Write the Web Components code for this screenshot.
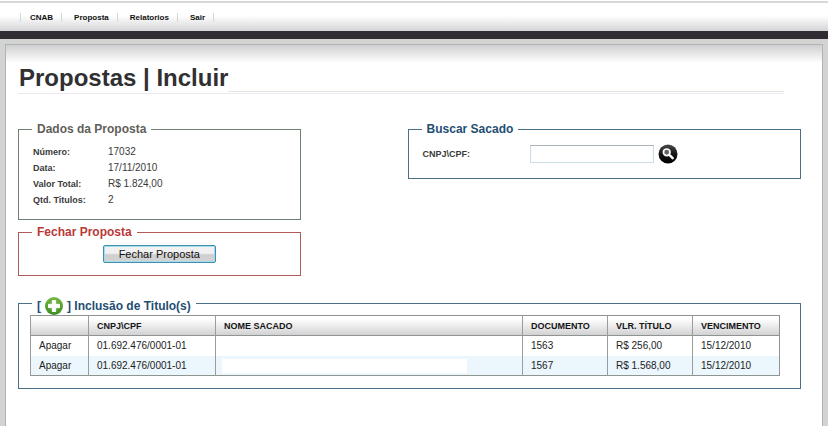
<!DOCTYPE html>
<html lang="pt-BR">
<head>
<meta charset="utf-8">
<title>Propostas | Incluir</title>
<style>
html, body { margin: 0; min-height: 100vh; }
body { display: flex; flex-direction: column; background: #d2d4d2; font: 10px/16px "Liberation Sans", Arial, sans-serif; color: #3a3a3a; }
.columns { display: grid; grid-template-columns: 283fr 394fr; gap: 107px; align-items: start; margin-bottom: 17px; }
.stack { display: grid; gap: 5px; }
.close { display: flex; justify-content: center; }
</style>
</head>
<body>
<nav-menu></nav-menu>
<page-panel heading="Propostas | Incluir">
  <div class="columns">
    <div class="stack">
      <field-box style="--line:#6f7f72; --ink:#5f5f5a; --top:8px; --bottom:11px"><span slot="title">Dados da Proposta</span><proposal-data></proposal-data></field-box>
      <field-box style="--line:#b05a5a; --ink:#b83a38; --top:6px"><span slot="title">Fechar Proposta</span><div class="close"><push-button>Fechar Proposta</push-button></div></field-box>
    </div>
    <field-box style="--top:8px; --bottom:14px"><span slot="title">Buscar Sacado</span><payer-search></payer-search></field-box>
  </div>
  <field-box style="--top:2px; --left:11px; --right:20px; --drop:6px"><add-title slot="title"></add-title><title-table></title-table></field-box>
</page-panel>

<script>
function define(name, html, setup) {
  const t = document.createElement('template');
  t.innerHTML = html;
  customElements.define(name, class extends HTMLElement {
    constructor() {
      super();
      this.attachShadow({ mode: 'open' }).append(t.content.cloneNode(true));
    }
    connectedCallback() { if (setup) setup(this, this.shadowRoot); }
  });
}

define('nav-menu', `<style>
:host { display: block; padding-top: 1px; background: #fff; border-bottom: 8px solid #2e2c32; }
nav { display: flex; align-items: center; height: 28px; padding-left: 20px; border-top: 2px solid #d8d8d8; background: linear-gradient(#fff 45%, #d4d4d8); }
a { font: bold 8px/9px "Liberation Sans", Arial, sans-serif; color: #111; text-decoration: none; padding: 0 8px 0 12px; border-left: 1px solid #d5d8d5; }
a:first-child { padding-left: 9px; }
a:last-child { border-right: 1px solid #d5d8d5; }
</style><nav><a href="#">CNAB</a><a href="#">Proposta</a><a href="#">Relatorios</a><a href="#">Sair</a></nav>`);

define('page-panel', `<style>
:host { display: block; flex: 1; margin: 5px 5px 0; padding: 19px 21px 20px 12px; border: 1px solid #b3b3b6; border-bottom: 0; background: linear-gradient(#cfcfd1, #fff 18px); }
header { display: flex; margin: 0 17px 28px 0; padding-bottom: 1px; border-bottom: 1px solid #eee6f0; }
h1 { margin: 0; padding-left: 1px; font: bold 24px/28px "Liberation Sans", Arial, sans-serif; color: #303033; }
header::after { content: ""; flex: 1; border-bottom: 1px solid #dce8d8; }
</style><header><h1></h1></header><slot></slot>`,
(el, root) => { root.querySelector('h1').textContent = el.getAttribute('heading'); });

define('field-box', `<style>
:host { display: block; }
fieldset { margin: 0; min-width: 0; border: 1px solid var(--line, #4c6f88); padding: var(--top, 7px) var(--right, 14px) var(--bottom, 12px) var(--left, 14px); }
legend { margin-left: calc(13px - var(--left, 14px)); padding: var(--drop, 0) 5px 0 5px; font: bold 12px/14px "Liberation Sans", Arial, sans-serif; color: var(--ink, #1f4e73); }
</style><fieldset><legend><slot name="title"></slot></legend><slot></slot></fieldset>`);

define('proposal-data', `<style>
:host { display: block; }
dl { display: grid; grid-template-columns: 75px 1fr; margin: 0; }
dt { font-weight: bold; font-size: 9px; }
dd { margin: 0; }
</style><dl><dt>Número:</dt><dd>17032</dd><dt>Data:</dt><dd>17/11/2010</dd><dt>Valor Total:</dt><dd>R$ 1.824,00</dd><dt>Qtd. Titulos:</dt><dd>2</dd></dl>`);

define('push-button', `<style>
:host { display: block; }
button { display: block; height: 18px; padding: 0 15px; border: 1px solid #3f8fb0; border-radius: 2px; box-shadow: inset 0 0 0 1px #a5dcec; background: linear-gradient(#f1f1f1 45%, #cfcfcf 55%, #d4d4d4); font: 11px/14px "Liberation Sans", Arial, sans-serif; color: #111; }
</style><button type="button"><slot></slot></button>`);

define('payer-search', `<style>
:host { display: block; }
form { display: flex; align-items: center; height: 20px; }
label { width: 107px; font-weight: bold; font-size: 9px; }
input { box-sizing: border-box; width: 124px; height: 18px; margin: 0; padding: 0 3px; border: 1px solid #ccdce4; border-top-color: #a9b3b8; background: #fff; font: inherit; }
button { margin: 0 0 0 4px; padding: 0; border: 0; background: none; }
svg { display: block; }
</style><form><label for="doc">CNPJ\\CPF:</label><input id="doc" type="text"><button type="button" aria-label="Buscar"><svg width="20" height="20" viewBox="0 0 20 20"><defs><linearGradient id="g" x2="0" y2="1"><stop stop-color="#4a4a4a"/><stop offset=".5" stop-color="#151515"/><stop offset="1" stop-color="#000"/></linearGradient></defs><circle cx="10" cy="10" r="9.5" fill="url(#g)"/><circle cx="8.7" cy="8.3" r="3.3" fill="#666" stroke="#fff" stroke-width="1.7"/><path d="M11.3 10.9l3.4 3.3" stroke="#fff" stroke-width="2.4" stroke-linecap="round"/></svg></button></form>`);

define('add-title', `<style>
:host { display: flex; align-items: center; gap: 3px; height: 14px; }
button { margin: -3px 0; padding: 0; border: 0; background: none; }
svg { display: block; }
</style><span>[</span><button type="button" aria-label="Incluir"><svg width="20" height="20" viewBox="0 0 20 20"><defs><linearGradient id="g" x2="0" y2="1"><stop stop-color="#78b843"/><stop offset="1" stop-color="#3d8d22"/></linearGradient></defs><circle cx="10" cy="10" r="9" fill="url(#g)"/><path d="M8.3 4.5h3.4v3.8h3.8v3.4h-3.8v3.8H8.3v-3.8H4.5V8.3h3.8z" fill="#fff" stroke="#fff" stroke-width="1" stroke-linejoin="round"/></svg></button><span>] Inclusão de Titulo(s)</span>`);

define('title-table', `<style>
:host { display: block; }
table { width: 100%; table-layout: fixed; border-collapse: collapse; border: 1px solid #8f9490; font-size: 10px; color: #222; }
th, td { box-sizing: border-box; height: 20px; padding: 1px 8px 0; text-align: left; line-height: 16px; border-left: 1px solid #9b9b9b; white-space: nowrap; }
th { font-size: 9px; color: #151515; }
thead tr { border-bottom: 1px solid #8f9490; background: linear-gradient(#fff 15%, #d2d2d4); }
tbody tr:nth-child(even) { background: #ebf6fd; }
a { color: inherit; text-decoration: none; }
.act { width: 58px; } .doc { width: 127px; } .num, .val { width: 85px; } .due { width: 87px; }
.name { padding-left: 6px; }
.blank { display: block; width: 84%; height: 14px; background: #fff; }
</style><table><colgroup><col class="act"><col class="doc"><col><col class="num"><col class="val"><col class="due"></colgroup>
<thead><tr><th></th><th>CNPJ\\CPF</th><th>NOME SACADO</th><th>DOCUMENTO</th><th>VLR. TÍTULO</th><th>VENCIMENTO</th></tr></thead><tbody></tbody></table>`,
(el, root) => {
  const rows = [['01.692.476/0001-01', '', '1563', 'R$ 256,00', '15/12/2010'], ['01.692.476/0001-01', '<span class="blank"></span>', '1567', 'R$ 1.568,00', '15/12/2010']];
  root.querySelector('tbody').innerHTML = rows.map(r => '<tr><td><a href="#">Apagar</a></td>' + r.map((c, i) => `<td${i === 1 ? ' class="name"' : ''}>${c}</td>`).join('') + '</tr>').join('');
});
</script>
</body>
</html>
